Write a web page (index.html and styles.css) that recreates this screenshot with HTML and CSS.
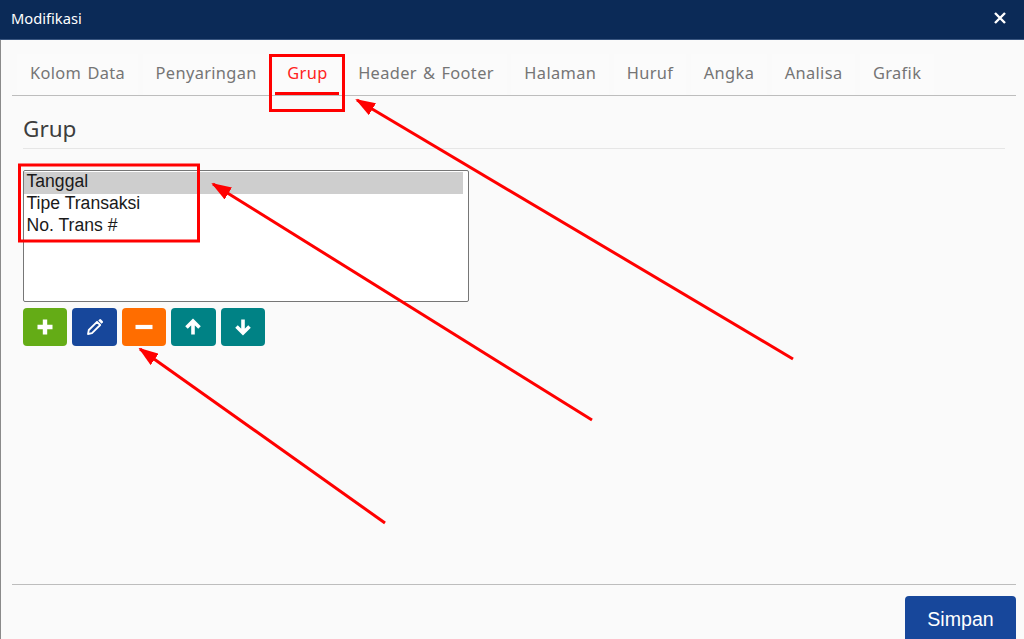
FILE: index.html
```html
<!DOCTYPE html>
<html lang="id">

<head>
    <meta charset="UTF-8">
    <meta name="viewport" content="width=device-width, initial-scale=1.0">
    <title>Modifikasi</title>
    <link rel="stylesheet" href="styles.css">
</head>

<body>
    <div class="dialog">
        <div class="titlebar">
            <span class="title">Modifikasi</span>
            <svg class="close" width="14" height="14" viewBox="0 0 14 14">
                <path d="M2 2 L12 12 M12 2 L2 12" stroke="#fff" stroke-width="2.4" fill="none" />
            </svg>
        </div>

        <div class="tabs">
            <div class="tab">Kolom Data</div>
            <div class="tab">Penyaringan</div>
            <div class="tab active">Grup</div>
            <div class="tab">Header &amp; Footer</div>
            <div class="tab">Halaman</div>
            <div class="tab">Huruf</div>
            <div class="tab">Angka</div>
            <div class="tab">Analisa</div>
            <div class="tab">Grafik</div>
        </div>

        <div class="content">
            <h2 class="heading">Grup</h2>
            <div class="listbox">
                <div class="option selected">Tanggal</div>
                <div class="option">Tipe Transaksi</div>
                <div class="option">No. Trans #</div>
            </div>
            <div class="actions">
                <button class="btn green">
                    <svg width="18" height="18" viewBox="0 0 18 18">
                        <path d="M9 1.5 V16.5 M1.5 9 H16.5" stroke="#fff" stroke-width="4.4" fill="none" />
                    </svg>
                </button>
                <button class="btn blue">
                    <svg width="18" height="18" viewBox="0 0 18 18">
                        <path d="M2 16 L2.8 12 L11 3.8 L14.2 7 L6 15.2 Z" stroke="#fff" stroke-width="1.8"
                            stroke-linejoin="round" fill="none" />
                        <path d="M12.3 2.5 L13.6 1.2 Q14.2 .8 14.8 1.2 L16.8 3.2 Q17.2 3.8 16.8 4.4 L15.5 5.7 Z" fill="#fff" />
                    </svg>
                </button>
                <button class="btn orange">
                    <svg width="18" height="18" viewBox="0 0 18 18">
                        <path d="M.5 9 H17.5" stroke="#fff" stroke-width="4.2" fill="none" />
                    </svg>
                </button>
                <button class="btn teal">
                    <svg width="18" height="18" viewBox="0 0 18 18">
                        <path d="M9 16.5 V4 M2.5 9.5 L9 3 L15.5 9.5" stroke="#fff" stroke-width="3.6" fill="none" />
                    </svg>
                </button>
                <button class="btn teal">
                    <svg width="18" height="18" viewBox="0 0 18 18">
                        <path d="M9 1.5 V14 M2.5 8.5 L9 15 L15.5 8.5" stroke="#fff" stroke-width="3.6" fill="none" />
                    </svg>
                </button>
            </div>
        </div>

        <div class="footer">
            <button class="save">Simpan</button>
        </div>
    </div>

    <!-- Anotasi merah di atas screenshot -->
    <svg class="notes" width="1024" height="639" viewBox="0 0 1024 639">
        <defs>
            <marker id="head" markerUnits="userSpaceOnUse" markerWidth="20" markerHeight="14" refX="18" refY="7"
                orient="auto">
                <path d="M0 0 L20 7 L0 14 Z" fill="#f00" />
            </marker>
        </defs>
        <g fill="none" stroke="#f00">
            <rect x="270.5" y="55.5" width="73" height="55" stroke-width="3" />
            <rect x="19.5" y="165" width="179" height="76" stroke-width="3" />
            <path d="M275 93.5 H339" stroke-width="3" />
            <path d="M793 359 L357 100" stroke-width="3" marker-end="url(#head)" />
            <path d="M592 420 L213 184" stroke-width="3" marker-end="url(#head)" />
            <path d="M385 523 L140 349" stroke-width="3" marker-end="url(#head)" />
        </g>
    </svg>
</body>

</html>
```

FILE: styles.css
```css
html,
body {
    height: 100%;
}

body {
    margin: 0;
    overflow: hidden;
    background-color: #fafafa;
    font-family: "Noto Sans", "Open Sans", sans-serif;
}

.dialog {
    display: flex;
    flex-direction: column;
    height: 639px;
    border-left: 1px solid #8a8a8a;
    box-sizing: border-box;
}

.titlebar {
    display: flex;
    align-items: center;
    justify-content: space-between;
    height: 40px;
    flex-shrink: 0;
    padding: 0 17px 3px 11px;
    box-sizing: border-box;
    background-color: #0b2a57;
    border-bottom: 1px solid #3a5680;
    margin-left: -1px;
    color: #fff;
}

.title {
    font-size: 14.7px;
}

.tabs {
    display: flex;
    gap: 4.5px;
    height: 41px;
    margin: 14px 8px 0 11px;
    padding-left: 5px;
    border-bottom: 1px solid #bdbdbd;
}

.tab {
    padding: 7px 13px 0;
    height: 34px;
    background-color: #fbfbfb;
    font-size: 16.4px;
    letter-spacing: 0.35px;
    word-spacing: 1.5px;
    color: #757575;
    white-space: nowrap;
}

.tab.active {
    color: #f22;
}

.content {
    flex: 1;
    padding: 0 0 0 22px;
}

.heading {
    margin: 17px 19px 21px 0;
    padding-bottom: 3px;
    font-size: 22.5px;
    line-height: 32px;
    font-weight: 400;
    color: #3d3d3d;
    border-bottom: 1px solid #e6e6e6;
}

.listbox {
    width: 446px;
    height: 132px;
    box-sizing: border-box;
    padding: 1px 1px 1px 0;
    background-color: #fff;
    border: 1px solid #767676;
    border-radius: 2px;
    font-family: "Liberation Sans", Arial, sans-serif;
    font-size: 17.6px;
    color: #1a1a1a;
}

.option {
    height: 22px;
    line-height: 18px;
    padding-left: 2.5px;
    margin-right: 4px;
}

.option.selected {
    background-color: #cecece;
}

.actions {
    display: flex;
    gap: 5px;
    margin-top: 6px;
}

.btn {
    display: flex;
    align-items: center;
    justify-content: center;
    width: 44.4px;
    height: 38px;
    padding: 0;
    border: 0;
    border-radius: 4px;
}

.green {
    background-color: #64ac16;
}

.blue {
    background-color: #17479b;
}

.orange {
    background-color: #ff6d00;
}

.teal {
    background-color: #008285;
}

.footer {
    display: flex;
    justify-content: flex-end;
    height: 55px;
    flex-shrink: 0;
    margin: 0 8px 0 11px;
    padding-top: 11px;
    box-sizing: border-box;
    border-top: 1px solid #bdbdbd;
}

.save {
    width: 111px;
    height: 48px;
    flex-shrink: 0;
    padding: 0 0 2px;
    border: 0;
    border-radius: 4px;
    background-color: #17479b;
    color: #fff;
    font-family: "Liberation Sans", Arial, sans-serif;
    font-size: 19.6px;
}

.notes {
    position: absolute;
    top: 0;
    left: 0;
    pointer-events: none;
}
```
